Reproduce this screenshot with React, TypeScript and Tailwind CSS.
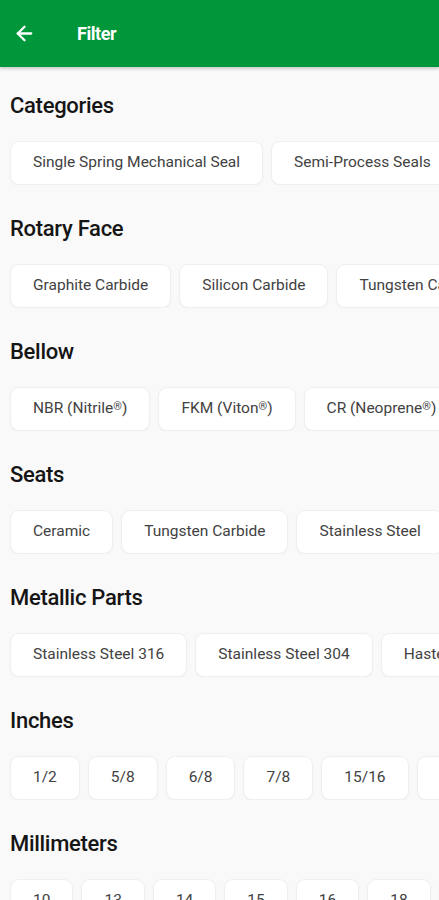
import { ArrowLeft } from "lucide-react";

const sections: { title: string; items: string[] }[] = [
  {
    title: "Categories",
    items: ["Single Spring Mechanical Seal", "Semi-Process Seals", "Multi Spring Seals"],
  },
  {
    title: "Rotary Face",
    items: ["Graphite Carbide", "Silicon Carbide", "Tungsten Carbide"],
  },
  {
    title: "Bellow",
    items: ["NBR (Nitrile®)", "FKM (Viton®)", "CR (Neoprene®)", "EPDM"],
  },
  {
    title: "Seats",
    items: ["Ceramic", "Tungsten Carbide", "Stainless Steel", "Graphite"],
  },
  {
    title: "Metallic Parts",
    items: ["Stainless Steel 316", "Stainless Steel 304", "Hastelloy"],
  },
  {
    title: "Inches",
    items: ["1/2", "5/8", "6/8", "7/8", "15/16", "1", "1 1/8"],
  },
  {
    title: "Millimeters",
    items: ["10", "13", "14", "15", "16", "18", "20", "22"],
  },
];

// the ® mark is drawn smaller than the label text
function Label({ text }: { text: string }) {
  const parts = text.split("®");
  return (
    <>
      {parts.map((p, i) => (
        <span key={i}>
          {p}
          {i < parts.length - 1 && <span className="text-[11px] align-[3px]">®</span>}
        </span>
      ))}
    </>
  );
}

function Chip({ label }: { label: string }) {
  return (
    <div className="shrink-0 h-[44px] px-[22px] flex items-center rounded-[9px] bg-white border border-[#efefef] shadow-[0_1px_2px_rgba(0,0,0,0.04)] text-[15.5px] text-[#424242] whitespace-nowrap">
      <Label text={label} />
    </div>
  );
}

export default function App() {
  return (
    <div className="min-h-[900px] bg-[#f9f9f9] font-['Roboto',sans-serif] overflow-hidden">
      {/* Top bar */}
      <header className="h-[67px] bg-[#00963a] flex items-center shadow-[0_2px_3px_rgba(0,0,0,0.18)]">
        <ArrowLeft className="ml-[13px] text-white" size={23} strokeWidth={2.4} />
        <h1 className="ml-[41px] text-white text-[18px] font-bold tracking-tight">Filter</h1>
      </header>

      <main className="pt-[25px] flex flex-col gap-[30px]">
        {sections.map((s) => (
          <section key={s.title}>
            <h2 className="px-[10px] h-[28px] leading-[28px] text-[22px] font-medium text-[#151515] tracking-[-0.3px]">
              {s.title}
            </h2>
            <div className="mt-[21px] pl-[10px] flex gap-2 overflow-hidden">
              {s.items.map((it) => (
                <Chip key={it} label={it} />
              ))}
            </div>
          </section>
        ))}
      </main>
    </div>
  );
}
